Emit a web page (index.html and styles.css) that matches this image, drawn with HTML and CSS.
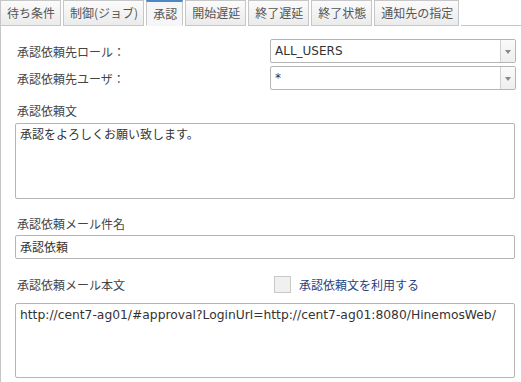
FILE: index.html
```html
<!DOCTYPE html>
<html lang="ja">
<head>
<meta charset="utf-8">
<link rel="stylesheet" href="styles.css">
</head>
<body>
<div class="tabs">
  <div class="tab">待ち条件</div>
  <div class="tab">制御(ジョブ)</div>
  <div class="tab active">承認</div>
  <div class="tab">開始遅延</div>
  <div class="tab">終了遅延</div>
  <div class="tab">終了状態</div>
  <div class="tab">通知先の指定</div>
  <div class="tab-fill"></div>
</div>
<div class="panel">
  <div class="row">
    <div class="label">承認依頼先ロール：</div>
    <div class="select"><span class="value">ALL_USERS</span><span class="arrow"></span></div>
  </div>
  <div class="row">
    <div class="label">承認依頼先ユーザ：</div>
    <div class="select"><span class="value">*</span><span class="arrow"></span></div>
  </div>
  <div class="field-label first">承認依頼文</div>
  <div class="textarea">承認をよろしくお願い致します。</div>
  <div class="field-label second">承認依頼メール件名</div>
  <div class="input">承認依頼</div>
  <div class="check-row">
    <div class="field-label inline">承認依頼メール本文</div>
    <div class="check"><span class="box"></span><span class="check-text">承認依頼文を利用する</span></div>
  </div>
  <div class="textarea url">http://cent7-ag01/#approval?LoginUrl=http://cent7-ag01:8080/HinemosWeb/</div>
</div>
</body>
</html>
```
FILE: styles.css
```css
html, body {
  margin: 0;
  padding: 0;
  background: #ffffff;
}
body {
  width: 521px;
  height: 382px;
  overflow: hidden;
  font-family: "DejaVu Sans", "Noto Sans CJK JP", sans-serif;
  font-size: 12px;
  color: #444;
}
.tabs {
  display: flex;
  gap: 2px;
  height: 26px;
  align-items: flex-end;
}
.tab {
  box-sizing: border-box;
  height: 26px;
  padding: 0 5px 0 6px;
  line-height: 24px;
  border: 1px solid #c6c6c6;
  background: linear-gradient(#fbfbfb, #ebebeb);
  font-family: "Noto Sans CJK JP", sans-serif;
  font-size: 12px;
  color: #555;
  white-space: nowrap;
}
.tab.active {
  border-top: 2px solid #4a88c8;
  border-bottom: 1px solid #f6f6f6;
  background: #f6f6f6;
  line-height: 23px;
}
.tab-fill {
  flex: 1;
  height: 26px;
  box-sizing: border-box;
  border-bottom: 1px solid #c6c6c6;
}
.panel {
  border-left: 1px solid #c6c6c6;
  height: 356px;
  padding: 13px 5px 0 14px;
  box-sizing: border-box;
}
.row {
  display: flex;
  align-items: center;
  height: 24px;
  margin-bottom: 3px;
}
.label, .field-label, .check-text {
  font-family: "Noto Sans CJK JP", sans-serif;
  font-size: 12px;
}
.label {
  flex: 1;
  padding-left: 2px;
}
.select {
  box-sizing: border-box;
  width: 246px;
  height: 24px;
  border: 1px solid #b5b5b5;
  border-radius: 2px;
  display: flex;
  align-items: center;
  background: #fff;
}
.select .value {
  flex: 1;
  padding-left: 4px;
  color: #333;
}
.select .arrow {
  width: 14px;
  height: 22px;
  border-left: 1px solid #d0d0d0;
  position: relative;
  background: linear-gradient(#fafafa, #eeeeee);
}
.select .arrow::after {
  content: "";
  position: absolute;
  left: 4px;
  top: 10px;
  border-left: 3px solid transparent;
  border-right: 3px solid transparent;
  border-top: 4px solid #888;
}
.field-label {
  padding-left: 2px;
  line-height: 16px;
}
.field-label.first {
  margin-top: 13px;
  margin-bottom: 4px;
}
.field-label.second {
  margin-top: 17px;
  margin-bottom: 3px;
}
.textarea, .input {
  box-sizing: border-box;
  width: 500px;
  border: 1px solid #b5b5b5;
  border-radius: 2px;
  padding: 2px 4px;
  color: #333;
  background: #fff;
}
.textarea {
  height: 76px;
  font-family: "Noto Sans CJK JP", sans-serif;
  line-height: 16px;
}
.input {
  height: 24px;
  line-height: 18px;
  font-family: "Noto Sans CJK JP", sans-serif;
}
.check-row {
  display: flex;
  align-items: center;
  margin-top: 16px;
  margin-bottom: 9px;
  height: 19px;
}
.check-row .field-label.inline {
  width: 257px;
}
.check {
  display: flex;
  align-items: center;
}
.box {
  box-sizing: border-box;
  width: 17px;
  height: 17px;
  border: 1px solid #c8c8c8;
  background: #f0f0f0;
  margin-right: 8px;
}
.check-text {
  color: #2b3f7e;
}
.textarea.url {
  height: 75px;
  font-family: "DejaVu Sans", sans-serif;
  font-size: 12.3px;
  padding-top: 3px;
}
```
